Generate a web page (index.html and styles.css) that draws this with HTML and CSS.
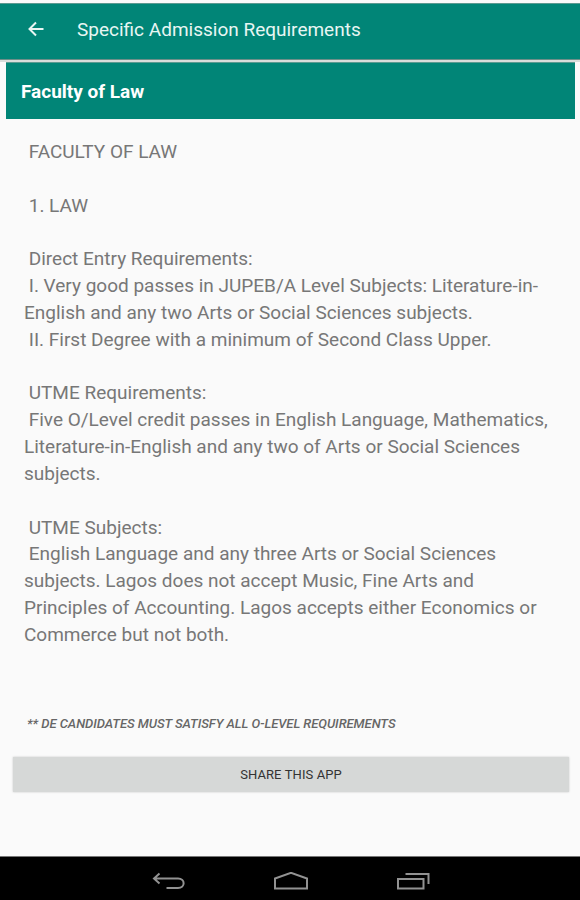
FILE: index.html
```
<!DOCTYPE html>
<html lang="en">
<head>
    <meta charset="UTF-8">
    <meta name="viewport" content="width=device-width, initial-scale=1.0">
    <title>Specific Admission Requirements</title>
    <link rel="stylesheet" href="styles.css">
</head>
<body>
    <header class="toolbar">
        <svg class="back-icon" viewBox="0 0 16 16">
            <path d="M8 1.5 L1.5 8 L8 14.5 M1.5 8 H15.5"/>
        </svg>
        <h1 class="toolbar-title">Specific Admission Requirements</h1>
    </header>

    <main class="content">
        <h2 class="faculty">Faculty of Law</h2>

        <div class="requirements"> FACULTY OF LAW

 1. LAW

 Direct Entry Requirements:
 I. Very good passes in JUPEB/A Level Subjects: Literature-in-
English and any two Arts or Social Sciences subjects.
 II. First Degree with a minimum of Second Class Upper.

 UTME Requirements:
 Five O/Level credit passes in English Language, Mathematics,
Literature-in-English and any two of Arts or Social Sciences
subjects.

 UTME Subjects:
 English Language and any three Arts or Social Sciences
subjects. Lagos does not accept Music, Fine Arts and
Principles of Accounting. Lagos accepts either Economics or
Commerce but not both.</div>

        <p class="note">** DE CANDIDATES MUST SATISFY ALL O-LEVEL REQUIREMENTS</p>
        <button class="share-btn">SHARE THIS APP</button>
    </main>

    <!-- Android navigation bar -->
    <nav class="navbar">
        <svg class="nav-icon" viewBox="0 0 36 20">
            <path d="M8.5 1.5 L3 6.5 L8.5 11.5 M3 6.5 H27 C34.5 6.5 34.5 16 27 16 H15.5"/>
        </svg>
        <svg class="nav-icon" viewBox="0 0 36 20">
            <path d="M2 16.5 V6.5 L18 0.8 L34 6.5 V16.5 Z"/>
        </svg>
        <svg class="nav-icon" viewBox="0 0 36 20">
            <path d="M3 7 H28.5 V16.5 H3 Z M10.5 2 H33.5 V12"/>
        </svg>
    </nav>
</body>
</html>
```

FILE: styles.css
```
* {
    margin: 0;
    padding: 0;
    box-sizing: border-box;
}

body {
    display: flex;
    flex-direction: column;
    height: 900px;
    padding-top: 3px;
    background: #fafafa;
    font-family: Roboto, sans-serif;
    overflow: hidden;
}

.toolbar {
    display: flex;
    align-items: center;
    height: 57px;
    padding: 0 0 5px 28px;
    background: #018577;
    border-top: 1px solid #5b9a91;
    border-bottom: 1px solid #6d8f89;
    color: #e8f6f3;
}

.back-icon {
    width: 16px;
    height: 16px;
    fill: none;
    stroke: #e8f6f3;
    stroke-width: 2;
}

.toolbar-title {
    margin-left: 33px;
    font-size: 19px;
    font-weight: 400;
}

.content {
    flex: 1;
    display: flex;
    flex-direction: column;
    border-top: 2px solid #d9dddb;
}

.faculty {
    height: 57px;
    margin: 0 5px 0 6px;
    padding-left: 15px;
    background: #018577;
    border-top: 1px solid #5b9a91;
    color: #fff;
    font-size: 19px;
    font-weight: 700;
    line-height: 58px;
}

.requirements {
    margin: 20px 0 0 24px;
    color: #777;
    font-size: 19px;
    line-height: 26.83px;
    white-space: pre;
}

.note {
    margin: 67px 0 0 27px;
    color: #666;
    font-size: 13px;
    font-style: italic;
    font-weight: 500;
    letter-spacing: -0.05px;
    line-height: 16px;
}

.share-btn {
    height: 35px;
    margin: 25px 11px 0 13px;
    background: #d6d8d7;
    border: none;
    box-shadow: 0 0 2px rgba(0, 0, 0, 0.2);
    color: #333;
    font-family: inherit;
    font-size: 13px;
    letter-spacing: 0.1px;
}

.navbar {
    display: flex;
    justify-content: center;
    gap: 86px;
    height: 44px;
    padding: 15px 0 0 2px;
    background: #000;
    border-top: 1px solid #777;
}

.nav-icon {
    width: 36px;
    height: 20px;
    fill: none;
    stroke: #929292;
    stroke-width: 2;
}
```
